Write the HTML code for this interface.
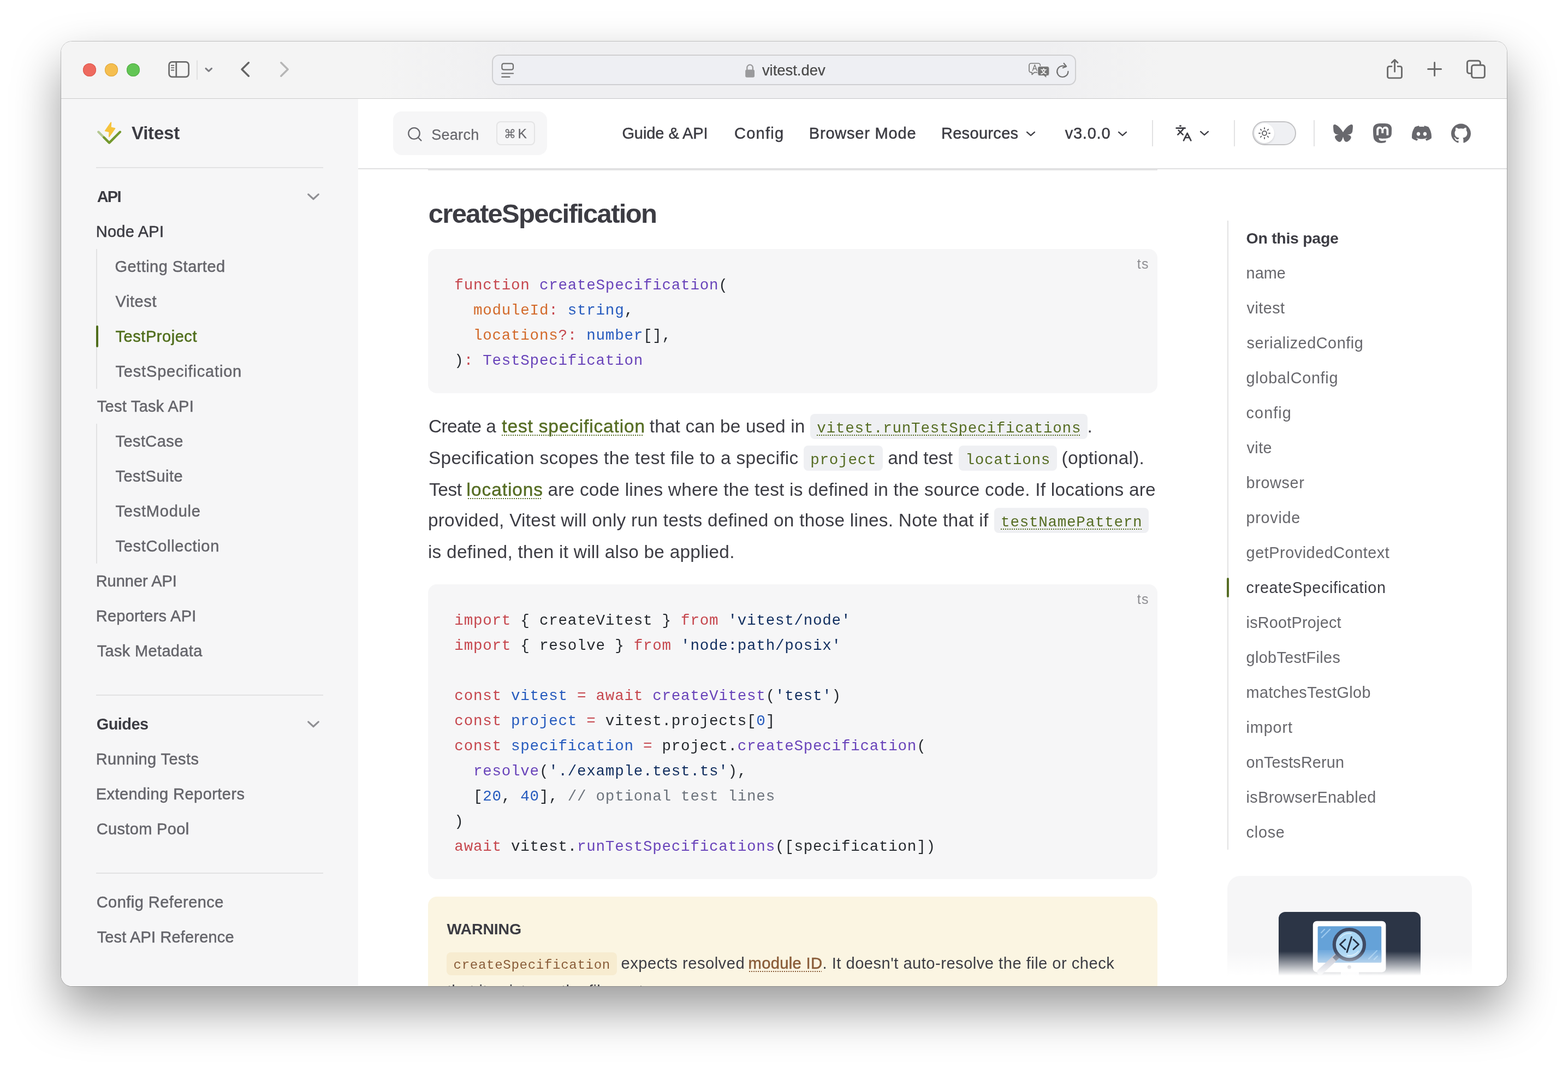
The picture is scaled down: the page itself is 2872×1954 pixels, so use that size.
<!DOCTYPE html>
<html lang="en">
<head>
<meta charset="utf-8">
<title>TestProject | Vitest</title>
<style>
html,body{margin:0;padding:0;background:#fff;}
body{width:2872px;height:1954px;position:relative;overflow:hidden;font-family:"Liberation Sans",sans-serif;color:#3c3c43;-webkit-font-smoothing:antialiased;}
#shadow{position:absolute;left:112px;top:76px;width:2648px;height:1730px;border-radius:20px;background:#fff;
  box-shadow:0 0 0 1px rgba(0,0,0,.21),0 42px 88px rgba(0,0,0,.4);}
#win{position:absolute;left:112px;top:76px;width:2648px;height:1730px;border-radius:20px;overflow:hidden;background:#fff;}
#abs{position:absolute;left:-112px;top:-76px;width:2872px;height:1954px;will-change:transform;}
#abs div,#abs span,#abs svg,#abs p,#abs h2,#abs a,#abs nav,#abs aside,#abs header,#abs main,#abs ul,#abs li,#abs pre,#abs code,#abs kbd,#abs button{position:absolute;margin:0;padding:0;box-sizing:border-box;}
#abs .t{white-space:pre;display:block;}
#abs .t span, #abs .t a, #abs .t code{position:static;}
a{color:inherit;text-decoration:none;}
ul{list-style:none;}
pre,code,kbd{font-family:"Liberation Mono","DejaVu Sans Mono",monospace;}
button{border:0;background:none;font:inherit;}
.box{left:0;top:0;}
.m5{-webkit-text-stroke:0.5px currentColor;}
.m3{-webkit-text-stroke:0.25px currentColor;}
.m6{-webkit-text-stroke:0.9px currentColor;}
.m7{-webkit-text-stroke:1.1px currentColor;}
.lnk{background:linear-gradient(90deg,currentColor 50%,transparent 50%) 0 calc(100% - 1.3px)/4px 2px repeat-x;}
.lnk.c{background-position:0 calc(100% - 9.5px);}
.lnk.w{background-position:0 100%;}

.dots{background:linear-gradient(90deg,currentColor 50%,transparent 50%) 0 0/4px 2px repeat-x;}

</style>
</head>
<body>
<div id="shadow"></div>
<div id="win">
<div id="abs">
<header id="toolbar" style="left:112px;top:76px;width:2648px;height:105px;background:linear-gradient(90deg,#f4f4f4 0%,#f4f4f4 22%,#efeff1 32%,#efeff1 68%,#f3f3f3 76%,#f3f3f3 100%);z-index:50;"></header><div style="left:112px;top:180px;width:2648px;height:1px;background:rgba(0,0,0,.17);z-index:60"></div><div style="left:152px;top:116px;width:24px;height:24px;border-radius:50%;background:#ee6a5f;box-shadow:inset 0 0 0 1px #dc574c;z-index:61"></div><div style="left:192px;top:116px;width:24px;height:24px;border-radius:50%;background:#f5be4f;box-shadow:inset 0 0 0 1px #dda63b;z-index:61"></div><div style="left:232px;top:116px;width:24px;height:24px;border-radius:50%;background:#62c554;box-shadow:inset 0 0 0 1px #52ab43;z-index:61"></div><div id="urlbar" style="left:901px;top:100px;width:1070px;height:56px;border-radius:13px;border:2px solid #cfcfd1;background:#eeeff3;z-index:61"></div><span class="t m3" style="left:1395.90px;top:112.00px;font-size:27.5px;line-height:33px;font-weight:400;color:#4a4a4a;letter-spacing:-0.035px;z-index:62;">vitest.dev</span><svg style="left:0;top:0;z-index:62" width="2872" height="200" viewBox="0 0 2872 200" fill="none" stroke-linecap="round" stroke-linejoin="round">
<g stroke="#6a6a6a" stroke-width="2.7">
<rect x="309.6" y="113.4" width="36" height="27.4" rx="5.5"/>
<path d="M322.8 114v26.4"/>
<path d="M313.8 119.7h4.6M313.8 124.1h4.6M313.8 128.5h4.6" stroke-width="1.9"/>
</g>
<path d="M361 111v34.5" stroke="#dcdcdc" stroke-width="1.6"/>
<path d="M377 125.4l5.3 5 5.3-5" stroke="#7d7d82" stroke-width="3"/>
<path d="M455.4 114.8l-12.4 12.2 12.4 12.2" stroke="#646464" stroke-width="3.5"/>
<path d="M514.8 114.8l12.4 12.2-12.4 12.2" stroke="#b6b6b6" stroke-width="3.5"/>
<g stroke="#6f6f6f" stroke-width="2.2">
<rect x="919.4" y="116.3" width="20.6" height="11.4" rx="3.2"/>
<path d="M919.3 134.5h20.8M919.3 140.9h14.2"/>
</g>
<g>
<rect x="1365.2" y="127.4" width="16.8" height="14.4" rx="2.8" fill="#9a9a9c"/>
<path d="M1368.3 128v-4a5.3 5.3 0 0 1 10.6 0v4" stroke="#9a9a9c" stroke-width="2.3"/>
</g>
<g>
<path d="M1888.6 116h13.2a3.6 3.6 0 0 1 3.6 3.6v9.4a3.6 3.6 0 0 1-3.6 3.6h-7.2l-4.4 3.9v-3.9h-1.6a3.6 3.6 0 0 1-3.6-3.6v-9.4a3.6 3.6 0 0 1 3.6-3.6z" stroke="#7a7a7a" stroke-width="1.7" fill="#efeff1"/>
<path d="M1891.4 129.3l3.9-10.6 3.9 10.6M1892.7 126h5.2" stroke="#7a7a7a" stroke-width="1.5"/>
<path d="M1904.6 121.4h13.4a3.9 3.9 0 0 1 3.9 3.9v9.6a3.9 3.9 0 0 1-3.9 3.9h-1.2v4.2l-4.8-4.2h-7.4a3.9 3.9 0 0 1-3.9-3.9v-9.6a3.9 3.9 0 0 1 3.9-3.9z" fill="#777" stroke="#efeff1" stroke-width="1"/>
<text x="1911.4" y="134.6" font-family="'Liberation Sans','Noto Sans CJK SC',sans-serif" font-size="11.5" font-weight="700" fill="#fff" stroke="none" text-anchor="middle">文</text>
</g>
<g stroke="#6f6f6f" stroke-width="2.2">
<path d="M1956.4 130.9a10.1 10.1 0 1 1-4.6-8.5"/>
<path d="M1948.6 116l4.6 5.6-6.4 2.6" />
</g>
<g stroke="#6b6b6b" stroke-width="2.9">
<path d="M2549 121.6h-4.4a3 3 0 0 0-3 3v15.3a3 3 0 0 0 3 3h19.9a3 3 0 0 0 3-3v-15.3a3 3 0 0 0-3-3h-4.4"/>
<path d="M2554.6 131.2v-21M2549.2 114.8l5.4-5.2 5.4 5.2"/>
</g>
<path d="M2615.6 126.4h24M2627.6 114.4v24" stroke="#6b6b6b" stroke-width="3"/>
<g stroke="#6b6b6b" stroke-width="2.9">
<path d="M2694.6 134.4h-3.4a3.8 3.8 0 0 1-3.8-3.8v-15.6a3.8 3.8 0 0 1 3.8-3.8h16.4a3.8 3.8 0 0 1 3.8 3.8v3.2"/>
<rect x="2695.6" y="119.2" width="23.8" height="23.2" rx="3.8"/>
</g>
</svg><nav id="nav" style="left:656px;top:180px;width:2104px;height:128px;background:#fff;z-index:30"></nav><div style="left:656px;top:308px;width:2104px;height:2px;background:#e0e0e1;z-index:31"></div><button id="search" style="left:720px;top:204px;width:282px;height:80px;border-radius:16px;background:#f6f6f7;z-index:31"></button><svg style="left:743.4px;top:229.4px;z-index:32" width="32" height="32" viewBox="0 0 24 24" fill="none" stroke="#67676c" stroke-width="1.7" stroke-linecap="round" stroke-linejoin="round"><circle cx="11.6" cy="11.5" r="7.7"/><path d="m21.3 21.3-4.2-4.2"/></svg><span class="t m3" style="left:790.20px;top:230.70px;font-size:27px;line-height:32px;font-weight:400;color:#67676c;letter-spacing:0.294px;z-index:32;">Search</span><kbd style="left:909px;top:222px;width:71px;height:44px;border:2px solid #e4e4e5;border-radius:8px;z-index:32"></kbd><span class="t" style="left:923.00px;top:233.30px;font-size:22px;line-height:26px;font-weight:400;color:#67676c;font-family:'DejaVu Sans', sans-serif;z-index:33;">⌘</span><span class="t m3" style="left:948.60px;top:230.30px;font-size:24.5px;line-height:29px;font-weight:400;color:#67676c;z-index:33;">K</span><a class="t m5" style="left:1139.40px;top:227.20px;font-size:29px;line-height:35px;font-weight:400;color:#3c3c43;letter-spacing:-0.073px;z-index:32;">Guide &amp; API</a><a class="t m5" style="left:1345.10px;top:227.20px;font-size:29px;line-height:35px;font-weight:400;color:#3c3c43;letter-spacing:1.220px;z-index:32;">Config</a><a class="t m5" style="left:1481.80px;top:227.20px;font-size:29px;line-height:35px;font-weight:400;color:#3c3c43;letter-spacing:0.797px;z-index:32;">Browser Mode</a><a class="t m5" style="left:1723.90px;top:227.20px;font-size:29px;line-height:35px;font-weight:400;color:#3c3c43;letter-spacing:0.323px;z-index:32;">Resources</a><a class="t m5" style="left:1950.70px;top:227.20px;font-size:29px;line-height:35px;font-weight:400;color:#3c3c43;letter-spacing:0.766px;z-index:32;">v3.0.0</a><svg style="left:1874.1px;top:230.5px;z-index:32" width="28" height="28" viewBox="0 0 24 24" fill="none" stroke="#3c3c43" stroke-width="2" stroke-linecap="round" stroke-linejoin="round"><path d="m6 9.4 6 5.2 6-5.2"/></svg><svg style="left:2042.1px;top:230.5px;z-index:32" width="28" height="28" viewBox="0 0 24 24" fill="none" stroke="#3c3c43" stroke-width="2" stroke-linecap="round" stroke-linejoin="round"><path d="m6 9.4 6 5.2 6-5.2"/></svg><div style="left:2110px;top:220px;width:2px;height:48px;background:#e2e2e3;z-index:32"></div><div style="left:2260px;top:220px;width:2px;height:48px;background:#e2e2e3;z-index:32"></div><div style="left:2406px;top:220px;width:2px;height:48px;background:#e2e2e3;z-index:32"></div><svg style="left:2152px;top:228px;z-index:32" width="32" height="32" viewBox="0 0 24 24" fill="none" stroke="#3c3c43" stroke-width="2" stroke-linecap="round" stroke-linejoin="round"><path d="m5 8 6 6"/><path d="m4 14 6-6 2-3"/><path d="M2 5h12"/><path d="M7 2h1"/><path d="m22 22-5-10-5 10"/><path d="M14 18h6"/></svg><svg style="left:2192.1px;top:230.1px;z-index:32" width="28" height="28" viewBox="0 0 24 24" fill="none" stroke="#3c3c43" stroke-width="2" stroke-linecap="round" stroke-linejoin="round"><path d="m6 9.4 6 5.2 6-5.2"/></svg><button id="appearance" style="left:2294px;top:222px;width:80px;height:44px;border-radius:22px;border:2px solid #c2c2c4;background:#eff0f3;z-index:32"></button><div style="left:2298px;top:226px;width:36px;height:36px;border-radius:50%;background:#fff;box-shadow:0 2px 4px rgba(0,0,0,.04),0 2px 3px rgba(0,0,0,.08);z-index:33"></div><svg style="left:2304px;top:232px;z-index:34" width="24" height="24" viewBox="0 0 24 24" fill="none" stroke="#67676c" stroke-width="2" stroke-linecap="round" stroke-linejoin="round"><circle cx="12" cy="12" r="4"/><path d="M12 2v2"/><path d="M12 20v2"/><path d="m4.93 4.93 1.41 1.41"/><path d="m17.66 17.66 1.41 1.41"/><path d="M2 12h2"/><path d="M20 12h2"/><path d="m6.34 17.66-1.41 1.41"/><path d="m19.07 4.93-1.41 1.41"/></svg><svg style="left:2442px;top:226px;z-index:32" width="36" height="36" viewBox="0 0 24 24" fill="#68686d"><path d="M12 10.8c-1.087-2.114-4.046-6.053-6.798-7.995C2.566.944 1.561 1.266.902 1.565.139 1.908 0 3.08 0 3.768c0 .69.378 5.65.624 6.479.815 2.736 3.713 3.66 6.383 3.364.136-.02.275-.039.415-.056-.138.022-.276.04-.415.056-3.912.58-7.387 2.005-2.83 7.078 5.013 5.19 6.87-1.113 7.823-4.308.953 3.195 2.05 9.271 7.733 4.308 4.267-4.308 1.172-6.498-2.74-7.078a8.741 8.741 0 0 1-.415-.056c.14.017.279.036.415.056 2.67.297 5.568-.628 6.383-3.364.246-.828.624-5.79.624-6.478 0-.69-.139-1.861-.902-2.206-.659-.298-1.664-.62-4.3 1.24C16.046 4.748 13.087 8.687 12 10.8Z"/></svg><svg style="left:2514px;top:226px;z-index:32" width="36" height="36" viewBox="0 0 24 24" fill="#68686d"><path d="M23.268 5.313c-.35-2.578-2.617-4.61-5.304-5.004C17.51.242 15.792 0 11.813 0h-.03c-3.98 0-4.835.242-5.288.309C3.882.692 1.496 2.518.917 5.127.64 6.412.61 7.837.661 9.143c.074 1.874.088 3.745.26 5.611.118 1.24.325 2.47.62 3.68.55 2.237 2.777 4.098 4.96 4.857 2.336.792 4.849.923 7.256.38.265-.061.527-.132.786-.213.585-.184 1.27-.39 1.774-.753a.057.057 0 0 0 .023-.043v-1.809a.052.052 0 0 0-.02-.041.053.053 0 0 0-.046-.01 20.282 20.282 0 0 1-4.709.545c-2.73 0-3.463-1.284-3.674-1.818a5.593 5.593 0 0 1-.319-1.433.053.053 0 0 1 .066-.054c1.517.363 3.072.546 4.632.546.376 0 .75 0 1.125-.01 1.57-.044 3.224-.124 4.768-.422.038-.008.077-.015.11-.024 2.435-.464 4.753-1.92 4.989-5.604.008-.145.03-1.52.03-1.67.002-.512.167-3.63-.024-5.545zm-3.748 9.195h-2.561V8.29c0-1.309-.55-1.976-1.67-1.976-1.23 0-1.846.79-1.846 2.35v3.403h-2.546V8.663c0-1.56-.617-2.35-1.848-2.35-1.112 0-1.668.668-1.67 1.977v6.218H4.822V8.102c0-1.31.337-2.35 1.011-3.12.696-.77 1.608-1.164 2.74-1.164 1.311 0 2.302.5 2.962 1.498l.638 1.06.638-1.06c.66-.999 1.65-1.498 2.96-1.498 1.13 0 2.043.395 2.74 1.164.675.77 1.012 1.81 1.012 3.12z"/></svg><svg style="left:2586px;top:226px;z-index:32" width="36" height="36" viewBox="0 0 24 24" fill="#68686d"><path d="M20.317 4.3698a19.7913 19.7913 0 00-4.8851-1.5152.0741.0741 0 00-.0785.0371c-.211.3753-.4447.8648-.6083 1.2495-1.8447-.2762-3.68-.2762-5.4868 0-.1636-.3933-.4058-.8742-.6177-1.2495a.077.077 0 00-.0785-.037 19.7363 19.7363 0 00-4.8852 1.515.0699.0699 0 00-.0321.0277C.5334 9.0458-.319 13.5799.0992 18.0578a.0824.0824 0 00.0312.0561c2.0528 1.5076 4.0413 2.4228 5.9929 3.0294a.0777.0777 0 00.0842-.0276c.4616-.6304.8731-1.2952 1.226-1.9942a.076.076 0 00-.0416-.1057c-.6528-.2476-1.2743-.5495-1.8722-.8923a.077.077 0 01-.0076-.1277c.1258-.0943.2517-.1923.3718-.2914a.0743.0743 0 01.0776-.0105c3.9278 1.7933 8.18 1.7933 12.0614 0a.0739.0739 0 01.0785.0095c.1202.099.246.1981.3728.2924a.077.077 0 01-.0066.1276 12.2986 12.2986 0 01-1.873.8914.0766.0766 0 00-.0407.1067c.3604.698.7719 1.3628 1.225 1.9932a.076.076 0 00.0842.0286c1.961-.6067 3.9495-1.5219 6.0023-3.0294a.077.077 0 00.0313-.0552c.5004-5.177-.8382-9.6739-3.5485-13.6604a.061.061 0 00-.0312-.0286zM8.02 15.3312c-1.1825 0-2.1569-1.0857-2.1569-2.419 0-1.3332.9555-2.4189 2.157-2.4189 1.2108 0 2.1757 1.0952 2.1568 2.419 0 1.3332-.9555 2.4189-2.1569 2.4189zm7.9748 0c-1.1825 0-2.1569-1.0857-2.1569-2.419 0-1.3332.9554-2.4189 2.1569-2.4189 1.2108 0 2.1757 1.0952 2.1568 2.419 0 1.3332-.946 2.4189-2.1568 2.4189Z"/></svg><svg style="left:2658px;top:226px;z-index:32" width="36" height="36" viewBox="0 0 24 24" fill="#68686d"><path d="M12 .297c-6.63 0-12 5.373-12 12 0 5.303 3.438 9.8 8.205 11.385.6.113.82-.258.82-.577 0-.285-.01-1.04-.015-2.04-3.338.724-4.042-1.61-4.042-1.61C4.422 18.07 3.633 17.7 3.633 17.7c-1.087-.744.084-.729.084-.729 1.205.084 1.838 1.236 1.838 1.236 1.07 1.835 2.809 1.305 3.495.998.108-.776.417-1.305.76-1.605-2.665-.3-5.466-1.332-5.466-5.93 0-1.31.465-2.38 1.235-3.22-.135-.303-.54-1.523.105-3.176 0 0 1.005-.322 3.3 1.23.96-.267 1.98-.399 3-.405 1.02.006 2.04.138 3 .405 2.28-1.552 3.285-1.23 3.285-1.23.645 1.653.24 2.873.12 3.176.765.84 1.23 1.91 1.23 3.22 0 4.61-2.805 5.625-5.475 5.92.42.36.81 1.096.81 2.22 0 1.606-.015 2.896-.015 3.286 0 .315.21.69.825.57C20.565 22.092 24 17.592 24 12.297c0-6.627-5.373-12-12-12"/></svg><aside id="sidebar" style="left:112px;top:180px;width:544px;height:1625px;background:#f6f6f7;z-index:20"></aside><svg style="left:176px;top:219.2px;z-index:22" width="48" height="48" viewBox="0 0 165 165" fill="none">
<path d="M120.831 57.2543L84.693 109.505C84.3099 110.059 83.7558 110.474 83.1148 110.687C82.4738 110.9 81.7809 110.898 81.1412 110.682C80.5015 110.466 79.95 110.049 79.5702 109.493C79.1905 108.937 79.0032 108.272 79.0367 107.6L80.4821 78.7432L57.1062 73.7887C56.6068 73.6829 56.1418 73.4542 55.753 73.1234C55.3643 72.7926 55.0641 72.37 54.8797 71.8939C54.6953 71.4178 54.6324 70.9031 54.6967 70.3965C54.7609 69.8899 54.9503 69.4072 55.2477 68.9922L91.3856 16.7416C91.7687 16.1877 92.3228 15.7727 92.9638 15.5594C93.6048 15.3461 94.2977 15.3482 94.9374 15.5643C95.5771 15.7805 96.1286 16.1977 96.5084 16.7536C96.8882 17.3096 97.0754 17.9739 97.0419 18.6457L95.5965 47.5028L118.972 52.4573C119.472 52.5631 119.937 52.7918 120.325 53.1226C120.714 53.4534 121.014 53.876 121.199 54.3521C121.383 54.8282 121.446 55.3429 121.382 55.8495C121.317 56.3561 121.128 56.8388 120.831 57.2538L120.831 57.2543Z" fill="#f6c33c"/>
<path d="M82.9866 153.343C82.0254 153.344 81.0735 153.156 80.1855 152.788C79.2975 152.42 78.4909 151.88 77.8122 151.2L43.6658 117.056C42.2998 115.683 41.5341 113.824 41.5366 111.887C41.5392 109.95 42.3098 108.092 43.6796 106.723C45.0493 105.353 46.9064 104.582 48.8435 104.579C50.7807 104.577 52.6399 105.342 54.0134 106.708L82.9866 135.678L146.105 72.5626C147.481 71.2088 149.336 70.4536 151.266 70.4615C153.197 70.4693 155.046 71.2396 156.41 72.6045C157.775 73.9695 158.546 75.8184 158.554 77.7487C158.561 79.679 157.806 81.5341 156.452 82.9101L88.1597 151.2C87.4811 151.88 86.6747 152.42 85.7869 152.788C84.8992 153.156 83.9475 153.344 82.9866 153.343Z" fill="#74992e"/>
<path d="M82.9572 153.343C83.9184 153.344 84.8703 153.156 85.7583 152.788C86.6463 152.42 87.4528 151.88 88.1316 151.2L122.278 117.056C123.644 115.683 124.41 113.824 124.407 111.887C124.405 109.95 123.634 108.092 122.264 106.723C120.894 105.353 119.037 104.582 117.1 104.579C115.163 104.577 113.304 105.342 111.93 106.708L82.9572 135.678L19.8389 72.5626C18.4629 71.2088 16.6077 70.4536 14.6775 70.4615C12.7472 70.4693 10.8982 71.2396 9.53331 72.6045C8.16839 73.9695 7.39811 75.8184 7.39025 77.7487C7.38239 79.679 8.13759 81.5341 9.49135 82.9101L77.7841 151.2C78.4627 151.88 79.2691 152.42 80.1569 152.788C81.0446 153.156 81.9963 153.344 82.9572 153.343Z" fill="#74992e" fill-opacity="0.5"/>
</svg><span class="t" style="left:240.90px;top:224.30px;font-size:33px;line-height:40px;font-weight:700;color:#3c3c43;letter-spacing:-0.176px;z-index:22;">Vitest</span><div style="left:176px;top:306px;width:416px;height:2px;background:#e2e2e3;z-index:22"></div><ul id="sidebar-items" class="box" style="z-index:22"><li class="box"><span class="t" style="left:177.70px;top:343.00px;font-size:29px;line-height:35px;font-weight:700;color:#3c3c43;letter-spacing:-1.793px;">API</span></li><li class="box"><a class="t m5" style="left:175.70px;top:407.00px;font-size:29px;line-height:35px;font-weight:400;color:#3c3c43;letter-spacing:0.247px;">Node API</a></li><li class="box"><a class="t m5" style="left:210.50px;top:471.00px;font-size:29px;line-height:35px;font-weight:400;color:#65656b;letter-spacing:0.469px;">Getting Started</a></li><li class="box"><a class="t m5" style="left:211.50px;top:535.00px;font-size:29px;line-height:35px;font-weight:400;color:#65656b;letter-spacing:0.591px;">Vitest</a></li><li class="box"><a class="t m5" style="left:211.50px;top:599.00px;font-size:29px;line-height:35px;font-weight:400;color:#506e1c;letter-spacing:0.551px;">TestProject</a></li><li class="box"><a class="t m5" style="left:211.50px;top:663.00px;font-size:29px;line-height:35px;font-weight:400;color:#65656b;letter-spacing:0.820px;">TestSpecification</a></li><li class="box"><a class="t m5" style="left:177.70px;top:727.00px;font-size:29px;line-height:35px;font-weight:400;color:#65656b;letter-spacing:0.291px;">Test Task API</a></li><li class="box"><a class="t m5" style="left:211.50px;top:791.00px;font-size:29px;line-height:35px;font-weight:400;color:#65656b;letter-spacing:0.420px;">TestCase</a></li><li class="box"><a class="t m5" style="left:211.50px;top:855.00px;font-size:29px;line-height:35px;font-weight:400;color:#65656b;letter-spacing:0.480px;">TestSuite</a></li><li class="box"><a class="t m5" style="left:211.50px;top:919.00px;font-size:29px;line-height:35px;font-weight:400;color:#65656b;letter-spacing:0.792px;">TestModule</a></li><li class="box"><a class="t m5" style="left:211.50px;top:983.00px;font-size:29px;line-height:35px;font-weight:400;color:#65656b;letter-spacing:0.715px;">TestCollection</a></li><li class="box"><a class="t m5" style="left:175.70px;top:1047.00px;font-size:29px;line-height:35px;font-weight:400;color:#65656b;letter-spacing:-0.017px;">Runner API</a></li><li class="box"><a class="t m5" style="left:175.70px;top:1111.00px;font-size:29px;line-height:35px;font-weight:400;color:#65656b;letter-spacing:0.261px;">Reporters API</a></li><li class="box"><a class="t m5" style="left:177.70px;top:1175.00px;font-size:29px;line-height:35px;font-weight:400;color:#65656b;letter-spacing:0.336px;">Task Metadata</a></li><li class="box"><span class="t" style="left:176.70px;top:1309.00px;font-size:29px;line-height:35px;font-weight:700;color:#3c3c43;letter-spacing:-0.554px;">Guides</span></li><li class="box"><a class="t m5" style="left:175.70px;top:1373.00px;font-size:29px;line-height:35px;font-weight:400;color:#65656b;letter-spacing:0.419px;">Running Tests</a></li><li class="box"><a class="t m5" style="left:175.70px;top:1437.00px;font-size:29px;line-height:35px;font-weight:400;color:#65656b;letter-spacing:0.441px;">Extending Reporters</a></li><li class="box"><a class="t m5" style="left:176.70px;top:1501.00px;font-size:29px;line-height:35px;font-weight:400;color:#65656b;letter-spacing:0.343px;">Custom Pool</a></li><li class="box"><a class="t m5" style="left:176.70px;top:1635.00px;font-size:29px;line-height:35px;font-weight:400;color:#65656b;letter-spacing:0.470px;">Config Reference</a></li><li class="box"><a class="t m5" style="left:177.70px;top:1699.00px;font-size:29px;line-height:35px;font-weight:400;color:#65656b;letter-spacing:0.152px;">Test API Reference</a></li></ul><svg style="left:556.0px;top:342.0px;z-index:22" width="36" height="36" viewBox="0 0 24 24" fill="none" stroke="#8f8f93" stroke-width="2.1" stroke-linecap="round" stroke-linejoin="round"><path d="m5.8 9.2 6.2 5.8 6.2-5.8"/></svg><svg style="left:556.0px;top:1308.0px;z-index:22" width="36" height="36" viewBox="0 0 24 24" fill="none" stroke="#8f8f93" stroke-width="2.1" stroke-linecap="round" stroke-linejoin="round"><path d="m5.8 9.2 6.2 5.8 6.2-5.8"/></svg><div style="left:176px;top:456px;width:2px;height:256px;background:#e2e2e3;z-index:21"></div><div style="left:176px;top:776px;width:2px;height:256px;background:#e2e2e3;z-index:21"></div><div style="left:176px;top:596px;width:4px;height:40px;border-radius:4px;background:#506e1c;z-index:22"></div><div style="left:176px;top:1272px;width:416px;height:2px;background:#e2e2e3;z-index:22"></div><div style="left:176px;top:1598px;width:416px;height:2px;background:#e2e2e3;z-index:22"></div><main id="content" class="box" style="z-index:5"><div style="left:784px;top:310px;width:1336px;height:2px;background:#e2e2e3"></div><h2 class="t" style="left:784.80px;top:362.00px;font-size:49px;line-height:59px;font-weight:700;color:#3c3c43;letter-spacing:-1.679px;">createSpecification</h2><div class="codeblock" style="left:784px;top:456px;width:1336px;height:264px;border-radius:16px;background:#f6f6f7"></div><span class="t" style="left:2082.80px;top:468.00px;font-size:25px;line-height:30px;font-weight:400;color:#8e8e92;letter-spacing:1.354px;">ts</span><pre class="box"><code class="box"><span class="t" style="left:832.36px;top:500.00px;font-size:27.6px;line-height:46px;letter-spacing:0.722px;font-family:'Liberation Mono', 'DejaVu Sans Mono', monospace"><span style="color:#c6474e">function</span><span style="color:#6944ba"> createSpecification</span><span style="color:#25292e">(</span></span><span class="t" style="left:832.36px;top:546.00px;font-size:27.6px;line-height:46px;letter-spacing:0.722px;font-family:'Liberation Mono', 'DejaVu Sans Mono', monospace"><span style="color:#d36a2b">  moduleId</span><span style="color:#c6474e">:</span><span style="color:#265bbe"> string</span><span style="color:#25292e">,</span></span><span class="t" style="left:832.36px;top:592.00px;font-size:27.6px;line-height:46px;letter-spacing:0.722px;font-family:'Liberation Mono', 'DejaVu Sans Mono', monospace"><span style="color:#d36a2b">  locations</span><span style="color:#c6474e">?:</span><span style="color:#265bbe"> number</span><span style="color:#25292e">[],</span></span><span class="t" style="left:832.36px;top:638.00px;font-size:27.6px;line-height:46px;letter-spacing:0.722px;font-family:'Liberation Mono', 'DejaVu Sans Mono', monospace"><span style="color:#25292e">)</span><span style="color:#c6474e">:</span><span style="color:#6944ba"> TestSpecification</span></span></code></pre><p class="box"><span class="t" style="left:784.90px;top:761.00px;font-size:33.4px;line-height:40px;font-weight:400;color:#3c3c43;letter-spacing:-0.600px;">Create a </span><a class="t lnkb m5 " style="left:919.30px;top:761.00px;font-size:33.4px;line-height:40px;font-weight:400;color:#566d24;letter-spacing:0.872px;">test specification</a><span class="dots" style="left:919.3px;top:796.2px;width:260.1px;height:2px;color:#566d24"></span><span class="t" style="left:1180.39px;top:761.00px;font-size:33.4px;line-height:40px;font-weight:400;color:#3c3c43;letter-spacing:0.133px;"> that can be used in </span><span class="ic" style="left:1484.2px;top:758.0px;width:507.5px;height:45.6px;border-radius:8px;background:#eff0f3"></span><code class="t" style="left:1496.32px;top:762.00px;font-size:27.6px;line-height:46px;letter-spacing:0.722px;color:#566d24;font-family:'Liberation Mono', 'DejaVu Sans Mono', monospace">vitest.runTestSpecifications</code><span class="dots" style="left:1496.0px;top:796.2px;width:484.0px;height:2px;color:#566d24"></span><span class="t" style="left:1991.40px;top:761.00px;font-size:33.4px;line-height:40px;font-weight:400;color:#3c3c43;">.</span><span class="t" style="left:784.90px;top:819.00px;font-size:33.4px;line-height:40px;font-weight:400;color:#3c3c43;letter-spacing:0.354px;">Specification scopes the test file to a specific </span><span class="ic" style="left:1472.2px;top:816.0px;width:144.5px;height:45.6px;border-radius:8px;background:#eff0f3"></span><code class="t" style="left:1484.31px;top:820.00px;font-size:27.6px;line-height:46px;letter-spacing:0.722px;color:#566d24;font-family:'Liberation Mono', 'DejaVu Sans Mono', monospace">project</code><span class="t" style="left:1617.04px;top:819.00px;font-size:33.4px;line-height:40px;font-weight:400;color:#3c3c43;letter-spacing:-0.019px;"> and test </span><span class="ic" style="left:1756.2px;top:816.0px;width:179.5px;height:45.6px;border-radius:8px;background:#eff0f3"></span><code class="t" style="left:1768.53px;top:820.00px;font-size:27.6px;line-height:46px;letter-spacing:0.722px;color:#566d24;font-family:'Liberation Mono', 'DejaVu Sans Mono', monospace">locations</code><span class="t" style="left:1935.04px;top:819.00px;font-size:33.4px;line-height:40px;font-weight:400;color:#3c3c43;letter-spacing:0.280px;"> (optional). </span><span class="t" style="left:785.90px;top:877.00px;font-size:33.4px;line-height:40px;font-weight:400;color:#3c3c43;letter-spacing:-0.353px;">Test </span><a class="t lnkb m5 " style="left:854.60px;top:877.00px;font-size:33.4px;line-height:40px;font-weight:400;color:#566d24;letter-spacing:0.951px;">locations</a><span class="dots" style="left:856.6px;top:912.2px;width:136.7px;height:2px;color:#566d24"></span><span class="t" style="left:994.01px;top:877.00px;font-size:33.4px;line-height:40px;font-weight:400;color:#3c3c43;letter-spacing:0.213px;"> are code lines where the test is defined in the source code. If locations are </span><span class="t" style="left:783.90px;top:933.00px;font-size:33.4px;line-height:40px;font-weight:400;color:#3c3c43;letter-spacing:0.266px;">provided, Vitest will only run tests defined on those lines. Note that if </span><span class="ic" style="left:1821px;top:930.0px;width:282.8px;height:45.6px;border-radius:8px;background:#eff0f3"></span><code class="t" style="left:1833.12px;top:934.00px;font-size:27.6px;line-height:46px;letter-spacing:0.722px;color:#566d24;font-family:'Liberation Mono', 'DejaVu Sans Mono', monospace">testNamePattern</code><span class="dots" style="left:1832.8px;top:968.2px;width:259.3px;height:2px;color:#566d24"></span><span class="t" style="left:774.36px;top:991.00px;font-size:33.4px;line-height:40px;font-weight:400;color:#3c3c43;letter-spacing:0.257px;"> is defined, then it will also be applied.</span></p><div class="codeblock" style="left:784px;top:1070px;width:1336px;height:540px;border-radius:16px;background:#f6f6f7"></div><span class="t" style="left:2082.80px;top:1082.00px;font-size:25px;line-height:30px;font-weight:400;color:#8e8e92;letter-spacing:1.354px;">ts</span><pre class="box"><code class="box"><span class="t" style="left:832.36px;top:1114.00px;font-size:27.6px;line-height:46px;letter-spacing:0.722px;font-family:'Liberation Mono', 'DejaVu Sans Mono', monospace"><span style="color:#c6474e">import</span><span style="color:#25292e"> { createVitest } </span><span style="color:#c6474e">from</span><span style="color:#112e5f"> 'vitest/node'</span></span><span class="t" style="left:832.36px;top:1160.00px;font-size:27.6px;line-height:46px;letter-spacing:0.722px;font-family:'Liberation Mono', 'DejaVu Sans Mono', monospace"><span style="color:#c6474e">import</span><span style="color:#25292e"> { resolve } </span><span style="color:#c6474e">from</span><span style="color:#112e5f"> 'node:path/posix'</span></span><span class="t" style="left:832.36px;top:1252.00px;font-size:27.6px;line-height:46px;letter-spacing:0.722px;font-family:'Liberation Mono', 'DejaVu Sans Mono', monospace"><span style="color:#c6474e">const</span><span style="color:#265bbe"> vitest</span><span style="color:#c6474e"> =</span><span style="color:#c6474e"> await</span><span style="color:#6944ba"> createVitest</span><span style="color:#25292e">(</span><span style="color:#112e5f">'test'</span><span style="color:#25292e">)</span></span><span class="t" style="left:832.36px;top:1298.00px;font-size:27.6px;line-height:46px;letter-spacing:0.722px;font-family:'Liberation Mono', 'DejaVu Sans Mono', monospace"><span style="color:#c6474e">const</span><span style="color:#265bbe"> project</span><span style="color:#c6474e"> =</span><span style="color:#25292e"> vitest.projects[</span><span style="color:#265bbe">0</span><span style="color:#25292e">]</span></span><span class="t" style="left:832.36px;top:1344.00px;font-size:27.6px;line-height:46px;letter-spacing:0.722px;font-family:'Liberation Mono', 'DejaVu Sans Mono', monospace"><span style="color:#c6474e">const</span><span style="color:#265bbe"> specification</span><span style="color:#c6474e"> =</span><span style="color:#25292e"> project.</span><span style="color:#6944ba">createSpecification</span><span style="color:#25292e">(</span></span><span class="t" style="left:832.36px;top:1390.00px;font-size:27.6px;line-height:46px;letter-spacing:0.722px;font-family:'Liberation Mono', 'DejaVu Sans Mono', monospace"><span style="color:#6944ba">  resolve</span><span style="color:#25292e">(</span><span style="color:#112e5f">'./example.test.ts'</span><span style="color:#25292e">),</span></span><span class="t" style="left:832.36px;top:1436.00px;font-size:27.6px;line-height:46px;letter-spacing:0.722px;font-family:'Liberation Mono', 'DejaVu Sans Mono', monospace"><span style="color:#25292e">  [</span><span style="color:#265bbe">20</span><span style="color:#25292e">, </span><span style="color:#265bbe">40</span><span style="color:#25292e">], </span><span style="color:#6c737c">// optional test lines</span></span><span class="t" style="left:832.36px;top:1482.00px;font-size:27.6px;line-height:46px;letter-spacing:0.722px;font-family:'Liberation Mono', 'DejaVu Sans Mono', monospace"><span style="color:#25292e">)</span></span><span class="t" style="left:832.36px;top:1528.00px;font-size:27.6px;line-height:46px;letter-spacing:0.722px;font-family:'Liberation Mono', 'DejaVu Sans Mono', monospace"><span style="color:#c6474e">await</span><span style="color:#25292e"> vitest.</span><span style="color:#6944ba">runTestSpecifications</span><span style="color:#25292e">([specification])</span></span></code></pre><div class="warning" style="left:784px;top:1642px;width:1336px;height:230px;border-radius:16px;background:#fbf5e2"></div><span class="t" style="left:818.40px;top:1683.60px;font-size:28.5px;line-height:34px;font-weight:700;color:#3c3c43;letter-spacing:-0.162px;">WARNING</span><span class="ic" style="left:818px;top:1744.3px;width:312.0px;height:41.6px;border-radius:8px;background:#f7ecd0"></span><code class="t" style="left:830.57px;top:1744.90px;font-size:24.2px;line-height:46px;letter-spacing:0.608px;color:#895c38;font-family:'Liberation Mono', 'DejaVu Sans Mono', monospace">createSpecification</code><span class="t" style="left:1128.92px;top:1746.90px;font-size:29.2px;line-height:35px;font-weight:400;color:#3c3c43;letter-spacing:0.474px;"> expects resolved </span><a class="t lnkb m5 " style="left:1370.60px;top:1746.90px;font-size:29.2px;line-height:35px;font-weight:400;color:#895c38;letter-spacing:0.307px;">module ID</a><span class="dots" style="left:1371.6px;top:1778.1px;width:133.4px;height:2px;color:#895c38"></span><span class="t" style="left:1506.60px;top:1746.90px;font-size:29.2px;line-height:35px;font-weight:400;color:#3c3c43;letter-spacing:0.459px;">. It doesn't auto-resolve the file or check </span><span class="t" style="left:818.90px;top:1798.20px;font-size:29.2px;line-height:35px;font-weight:400;color:#3c3c43;letter-spacing:0.350px;">that it exists on the file system.</span></main><aside id="outline" class="box" style="z-index:6"><div style="left:2248px;top:404px;width:2px;height:1152px;background:#e2e2e3"></div><div style="left:2247px;top:1058px;width:4px;height:36px;border-radius:4px;background:#566d24"></div><span class="t" style="left:2282.60px;top:418.80px;font-size:28.5px;line-height:34px;font-weight:700;color:#3c3c43;letter-spacing:-0.305px;">On this page</span><ul class="box"><li class="box"><a class="t" style="left:2282.60px;top:483.00px;font-size:28.8px;line-height:35px;font-weight:400;color:#67676c;letter-spacing:0.027px;">name</a></li><li class="box"><a class="t" style="left:2283.60px;top:547.00px;font-size:28.8px;line-height:35px;font-weight:400;color:#67676c;letter-spacing:0.458px;">vitest</a></li><li class="box"><a class="t" style="left:2283.60px;top:611.00px;font-size:28.8px;line-height:35px;font-weight:400;color:#67676c;letter-spacing:0.549px;">serializedConfig</a></li><li class="box"><a class="t" style="left:2282.60px;top:675.00px;font-size:28.8px;line-height:35px;font-weight:400;color:#67676c;letter-spacing:0.702px;">globalConfig</a></li><li class="box"><a class="t" style="left:2282.60px;top:739.00px;font-size:28.8px;line-height:35px;font-weight:400;color:#67676c;letter-spacing:1.074px;">config</a></li><li class="box"><a class="t" style="left:2283.60px;top:803.00px;font-size:28.8px;line-height:35px;font-weight:400;color:#67676c;letter-spacing:0.368px;">vite</a></li><li class="box"><a class="t" style="left:2282.60px;top:867.00px;font-size:28.8px;line-height:35px;font-weight:400;color:#67676c;letter-spacing:0.628px;">browser</a></li><li class="box"><a class="t" style="left:2282.60px;top:931.00px;font-size:28.8px;line-height:35px;font-weight:400;color:#67676c;letter-spacing:0.695px;">provide</a></li><li class="box"><a class="t" style="left:2282.60px;top:995.00px;font-size:28.8px;line-height:35px;font-weight:400;color:#67676c;letter-spacing:0.545px;">getProvidedContext</a></li><li class="box"><a class="t" style="left:2282.60px;top:1059.00px;font-size:28.8px;line-height:35px;font-weight:400;color:#3c3c43;letter-spacing:0.672px;">createSpecification</a></li><li class="box"><a class="t" style="left:2282.60px;top:1123.00px;font-size:28.8px;line-height:35px;font-weight:400;color:#67676c;letter-spacing:0.229px;">isRootProject</a></li><li class="box"><a class="t" style="left:2282.60px;top:1187.00px;font-size:28.8px;line-height:35px;font-weight:400;color:#67676c;letter-spacing:0.345px;">globTestFiles</a></li><li class="box"><a class="t" style="left:2282.60px;top:1251.00px;font-size:28.8px;line-height:35px;font-weight:400;color:#67676c;letter-spacing:0.389px;">matchesTestGlob</a></li><li class="box"><a class="t" style="left:2282.60px;top:1315.00px;font-size:28.8px;line-height:35px;font-weight:400;color:#67676c;letter-spacing:0.859px;">import</a></li><li class="box"><a class="t" style="left:2282.60px;top:1379.00px;font-size:28.8px;line-height:35px;font-weight:400;color:#67676c;letter-spacing:0.149px;">onTestsRerun</a></li><li class="box"><a class="t" style="left:2282.60px;top:1443.00px;font-size:28.8px;line-height:35px;font-weight:400;color:#67676c;letter-spacing:0.375px;">isBrowserEnabled</a></li><li class="box"><a class="t" style="left:2282.60px;top:1507.00px;font-size:28.8px;line-height:35px;font-weight:400;color:#67676c;letter-spacing:0.747px;">close</a></li></ul><div id="ad" style="left:2248px;top:1604px;width:448px;height:320px;border-radius:24px;background:#f6f6f7"></div><svg style="left:2342px;top:1670px" width="260" height="200" viewBox="0 0 260 200">
<path d="M0 12a12 12 0 0 1 12-12h236a12 12 0 0 1 12 12v188H0z" fill="#2c3546"/>
<rect x="114" y="106" width="33" height="40" fill="#e8e9ee"/>
<rect x="62.8" y="16.8" width="133.6" height="93.6" rx="7" fill="#fff"/>
<rect x="71.6" y="26.2" width="116.6" height="66.8" rx="2" fill="#65a2d8"/>
<path d="M71.6 70h116.6v21a2 2 0 0 1-2 2H73.6a2 2 0 0 1-2-2z" fill="#74acde"/>
<g stroke="#9cc9ee" stroke-width="2.4" stroke-linecap="round"><path d="M78 38l6-6M79 47l15-15M165 86l15-15M175 87l6-6"/></g>
<circle cx="129.4" cy="101.2" r="3.4" fill="#b3b3bb"/>
<path d="M106 82l-30 28" stroke="#b4b8c8" stroke-width="11" stroke-linecap="round"/>
<path d="M109 80l-7 6.5" stroke="#5b6479" stroke-width="9"/>
<circle cx="129.4" cy="59.8" r="27.6" fill="#a9d5f3" stroke="#3f4b64" stroke-width="6.2"/>
<path d="M113 47a20 20 0 0 1 20-7.4M146 72a20 20 0 0 1-20 7.6" stroke="#d4ecfb" stroke-width="2" fill="none" stroke-linecap="round"/>
<g stroke="#263043" stroke-width="3" fill="none" stroke-linecap="round" stroke-linejoin="round"><path d="M122 50.5l-9.5 9 9.5 9M137 50.5l9.5 9-9.5 9M133.6 46l-8.4 27.6"/></g>
</svg><div style="left:2248px;top:1742px;width:448px;height:64px;background:linear-gradient(rgba(255,255,255,0),#fff 70%)"></div></aside>
</div>
</div>
</body>
</html>
